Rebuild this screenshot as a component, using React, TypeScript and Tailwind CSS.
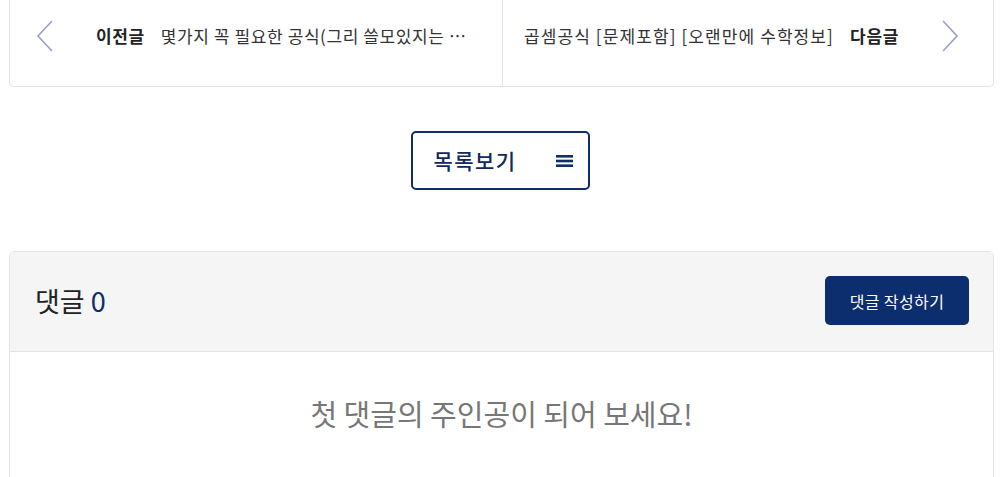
import React from 'react';

const font = { fontFamily: '"Noto Sans CJK KR", "Noto Sans", sans-serif' };

function Chevron({ dir }: { dir: 'left' | 'right' }) {
  return (
    <svg width="18" height="32" viewBox="0 0 18 32" fill="none" className="shrink-0">
      <path
        d={dir === 'left' ? 'M16 1 L2 16 L16 31' : 'M2 1 L16 16 L2 31'}
        stroke="#9b9bd0"
        strokeWidth="1.6"
      />
    </svg>
  );
}

function PostNav() {
  return (
    <div className="ml-[9px] w-[985px] h-[87px] flex border border-t-0 border-[#e4e4e4] rounded-b-[5px] bg-white">
      {/* 이전글 */}
      <div className="w-[493px] flex items-center pl-[26px] pr-[22px] border-r border-[#e4e4e4] pb-[14px]">
        <Chevron dir="left" />
        <span className="ml-[42px] text-[17px] font-bold text-[#222] shrink-0 tracking-[0.6px]">이전글</span>
        <span className="ml-[16px] text-[17px] text-[#333] truncate tracking-[0.6px]">몇가지 꼭 필요한 공식(그리 쓸모있지는 않지만 알아두면 좋은)</span>
      </div>
      {/* 다음글 */}
      <div className="flex-1 flex items-center pl-[21px] pr-[34px] pb-[14px]">
        <span className="text-[17px] text-[#333] truncate tracking-[1.1px]">곱셈공식 [문제포함] [오랜만에 수학정보]</span>
        <span className="ml-[16px] text-[17px] font-bold text-[#222] shrink-0 tracking-[0.8px]">다음글</span>
        <span className="ml-auto">
          <Chevron dir="right" />
        </span>
      </div>
    </div>
  );
}

export default function App() {
  return (
    <div className="w-[1000px] h-[477px] overflow-hidden bg-white" style={font}>
      <PostNav />

      <div className="flex justify-center mt-[44px]">
        <button className="w-[179px] h-[59px] border-2 border-[#0c2d6e] rounded-[5px] flex items-center pl-[21px] pr-[15px] bg-white">
          <span className="text-[21px] font-medium text-[#12295b] tracking-[1.4px]">목록보기</span>
          <svg width="17" height="14" viewBox="0 0 17 14" className="ml-auto">
            <rect x="0" y="1" width="17" height="2.6" fill="#0c2d6e" />
            <rect x="0" y="5.7" width="17" height="2.6" fill="#0c2d6e" />
            <rect x="0" y="10.4" width="17" height="2.6" fill="#0c2d6e" />
          </svg>
        </button>
      </div>

      <div className="ml-[9px] w-[985px] mt-[61px] border border-[#e4e4e4] rounded-t-[5px]">
        <div className="h-[100px] bg-[#f5f5f5] border-b border-[#e4e4e4] flex items-center justify-between pl-[25px] pr-[24px]">
          <h3 className="text-[27px] text-[#222] font-normal">
            댓글 <span className="text-[#0c2d6e]">0</span>
          </h3>
          <button className="w-[144px] h-[49px] bg-[#0c2d6e] rounded-[5px] text-white text-[16px] tracking-[0.4px] mt-[-2px]">
            댓글 작성하기
          </button>
        </div>
        <div className="h-[140px] flex justify-center pt-[40px]">
          <p className="text-[29px] text-[#777]">첫 댓글의 주인공이 되어 보세요!</p>
        </div>
      </div>
    </div>
  );
}
